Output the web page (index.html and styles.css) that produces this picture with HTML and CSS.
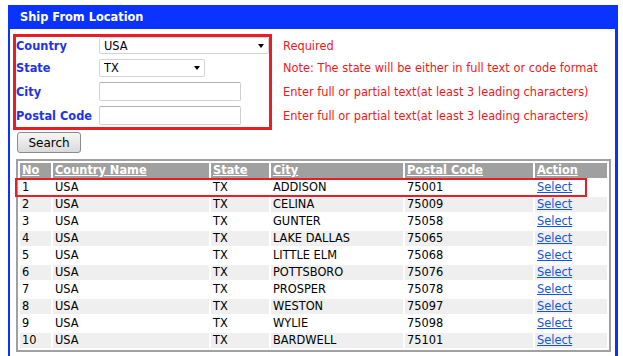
FILE: index.html
```html
<!DOCTYPE html>
<html lang="en">
<head>
    <meta charset="UTF-8">
    <title>Ship From Location</title>
    <link rel="stylesheet" href="styles.css">
</head>
<body>
    <div class="panel">
        <div class="panel-title">Ship From Location</div>
        <div class="panel-body">
            <div class="criteria">
                <div class="criteria-box">
                    <label for="country">Country</label>
                    <span class="select-wrap country"><select id="country"><option>USA</option></select></span>
                    <label for="state">State</label>
                    <span class="select-wrap state"><select id="state"><option>TX</option></select></span>
                    <label for="city">City</label>
                    <input type="text" id="city">
                    <label for="zip">Postal Code</label>
                    <input type="text" id="zip">
                </div>
                <div class="notes">
                    <span>Required</span>
                    <span>Note: The state will be either in full text or code format</span>
                    <span>Enter full or partial text(at least 3 leading characters)</span>
                    <span>Enter full or partial text(at least 3 leading characters)</span>
                </div>
            </div>

            <button class="search-btn">Search</button>

            <table class="results">
                <thead>
                    <tr>
                        <th class="c-no"><a href="#">No</a></th>
                        <th class="c-country"><a href="#">Country Name</a></th>
                        <th class="c-state"><a href="#">State</a></th>
                        <th class="c-city"><a href="#">City</a></th>
                        <th class="c-zip"><a href="#">Postal Code</a></th>
                        <th class="c-action"><a href="#">Action</a></th>
                    </tr>
                </thead>
                <tbody>
                    <tr><td>1</td><td>USA</td><td>TX</td><td>ADDISON</td><td>75001</td><td><a href="#">Select</a></td></tr>
                    <tr><td>2</td><td>USA</td><td>TX</td><td>CELINA</td><td>75009</td><td><a href="#">Select</a></td></tr>
                    <tr><td>3</td><td>USA</td><td>TX</td><td>GUNTER</td><td>75058</td><td><a href="#">Select</a></td></tr>
                    <tr><td>4</td><td>USA</td><td>TX</td><td>LAKE DALLAS</td><td>75065</td><td><a href="#">Select</a></td></tr>
                    <tr><td>5</td><td>USA</td><td>TX</td><td>LITTLE ELM</td><td>75068</td><td><a href="#">Select</a></td></tr>
                    <tr><td>6</td><td>USA</td><td>TX</td><td>POTTSBORO</td><td>75076</td><td><a href="#">Select</a></td></tr>
                    <tr><td>7</td><td>USA</td><td>TX</td><td>PROSPER</td><td>75078</td><td><a href="#">Select</a></td></tr>
                    <tr><td>8</td><td>USA</td><td>TX</td><td>WESTON</td><td>75097</td><td><a href="#">Select</a></td></tr>
                    <tr><td>9</td><td>USA</td><td>TX</td><td>WYLIE</td><td>75098</td><td><a href="#">Select</a></td></tr>
                    <tr><td>10</td><td>USA</td><td>TX</td><td>BARDWELL</td><td>75101</td><td><a href="#">Select</a></td></tr>
                </tbody>
            </table>
        </div>

        <!-- highlight drawn over the first result row -->
        <div class="row-mark"></div>
    </div>
</body>
</html>
```

FILE: styles.css
```css
body {
    font-family: 'DejaVu Sans', Verdana, sans-serif;
    font-size: 11.4px;
    background-color: #ffffff;
    margin: 5px 0 0 8px;
    color: #000;
}

.panel {
    position: relative;
    width: 605px;
    height: 360px;
    border-left: 2px solid #0a33ff;
    border-right: 3px solid #0a33ff;
}

.panel-title {
    background-color: #0a33ff;
    color: #fff;
    font-weight: bold;
    height: 24px;
    line-height: 24px;
    padding-left: 10px;
}

.panel-body {
    padding: 5px 0 0 3px;
}

.criteria {
    display: flex;
    align-items: flex-start;
}

.criteria-box {
    display: grid;
    grid-template-columns: 83px 170px;
    grid-template-rows: 17px 18px 19px 19px;
    row-gap: 5px;
    align-items: center;
    width: 253px;
    padding-bottom: 2px;
    border: 3px solid #ea1c24;
}

.criteria-box label {
    color: #1e32e6;
    font-weight: bold;
}

.notes {
    display: grid;
    grid-template-rows: 17px 18px 19px 19px;
    row-gap: 5px;
    align-items: center;
    margin: 3px 0 0 11px;
    color: #f01820;
    white-space: nowrap;
}

.select-wrap {
    position: relative;
    display: block;
    height: 100%;
}

.select-wrap.state {
    width: 106px;
}

.select-wrap select {
    -webkit-appearance: none;
    appearance: none;
    width: 100%;
    height: 100%;
    margin: 0;
    padding: 0 0 0 4px;
    font-family: inherit;
    font-size: 11.4px;
    color: #000;
    background-color: #fff;
    border: 1px solid #d4d4d4;
    border-radius: 2px;
}

.select-wrap::after {
    content: "";
    position: absolute;
    right: 5px;
    top: 7px;
    border-top: 4px solid #000;
    border-left: 3px solid transparent;
    border-right: 3px solid transparent;
    pointer-events: none;
}

.criteria-box input {
    width: 142px;
    height: 19px;
    box-sizing: border-box;
    margin: 0;
    padding: 0 3px;
    font-family: inherit;
    font-size: 11.4px;
    border: 1px solid #d0d0d0;
    border-top-color: #b0b0b0;
    border-radius: 2px;
}

.search-btn {
    display: block;
    width: 64px;
    height: 21px;
    margin: 2px 0 0 4px;
    padding: 0;
    font-family: inherit;
    font-size: 12px;
    color: #000;
    background: linear-gradient(#f6f6f6, #dadada);
    border: 1px solid #8a8a8a;
    border-radius: 3px;
}

.results {
    table-layout: fixed;
    width: 594px;
    margin: 6px 0 0 3px;
    border: 2px solid #a0a0a0;
    border-spacing: 2px;
}

.results th,
.results td {
    height: 15px;
    padding: 0 2px;
    line-height: 15px;
    text-align: left;
    white-space: nowrap;
}

.results th {
    background-color: #a0a0a0;
}

.results th a {
    color: #fff;
    font-weight: bold;
}

.c-no { width: 27px; }
.c-country { width: 152px; }
.c-state { width: 54px; }
.c-city { width: 128px; }
.c-zip { width: 124px; }
.c-action { width: 68px; }

.results tbody tr:nth-child(even) td {
    background-color: #efefef;
}

.results td a {
    color: #1055e0;
}

.row-mark {
    position: absolute;
    left: 5px;
    top: 173px;
    width: 572px;
    height: 19px;
    box-sizing: border-box;
    border: 2px solid #ea1c24;
}
```
